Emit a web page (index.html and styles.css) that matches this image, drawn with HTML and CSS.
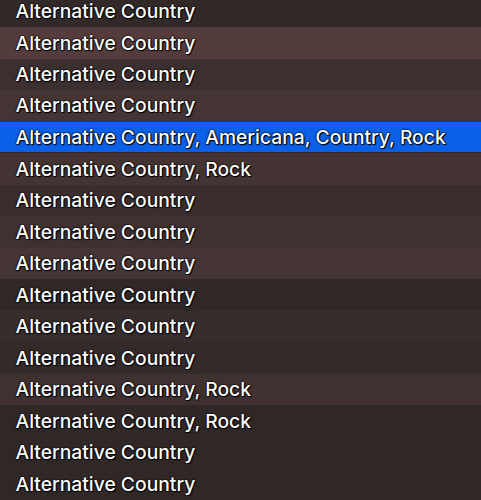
FILE: index.html
```html
<!DOCTYPE html>
<html>
<head>
<meta charset="utf-8">
<link rel="stylesheet" href="styles.css">
</head>
<body>
<div class="list">
  <div class="row r0">Alternative Country</div>
  <div class="row r1">Alternative Country</div>
  <div class="row r2">Alternative Country</div>
  <div class="row r3">Alternative Country</div>
  <div class="row sel">Alternative Country, Americana, Country, Rock</div>
  <div class="row r5">Alternative Country, Rock</div>
  <div class="row r6">Alternative Country</div>
  <div class="row r7">Alternative Country</div>
  <div class="row r8">Alternative Country</div>
  <div class="row r9">Alternative Country</div>
  <div class="row r10">Alternative Country</div>
  <div class="row r11">Alternative Country</div>
  <div class="row r12">Alternative Country, Rock</div>
  <div class="row r13">Alternative Country, Rock</div>
  <div class="row r14">Alternative Country</div>
  <div class="row r15">Alternative Country</div>
</div>
</body>
</html>
```
FILE: styles.css
```css
html, body {
  margin: 0;
  padding: 0;
  background: #302826;
  overflow: hidden;
}
.list {
  display: flex;
  flex-direction: column;
  margin-top: -4.5px;
}
.row {
  height: 31.5px;
  box-sizing: border-box;
  padding-left: 15.5px;
  display: flex;
  align-items: center;
  font-family: Inter, "Liberation Sans", Arial, sans-serif;
  font-size: 19.3px;
  font-weight: 500;
  color: #ffffff;
  white-space: nowrap;
  text-shadow: 0 0 1px #000, 0 0 1px #000, 0 0 2px #000, 1px 1px 1px #000;
}
.r0 { background: #322a28; }
.r1 { background: #543b3c; }
.r2 { background: #3c2f2f; }
.r3 { background: #443434; border-bottom: 1px solid #5a2a12; }
.sel { background: #0a60e6; border-bottom: 1px solid #3a2020; }
.r5 { background: #433333; }
.r6 { background: #3a2e2d; }
.r7 { background: #3e3130; }
.r8 { background: #463535; }
.r9 { background: #2f2826; }
.r10 { background: #372d2c; }
.r11 { background: #342a29; }
.r12 { background: #3f3130; }
.r13 { background: #302826; }
.r14 { background: #302826; }
.r15 { background: #302826; }
```
